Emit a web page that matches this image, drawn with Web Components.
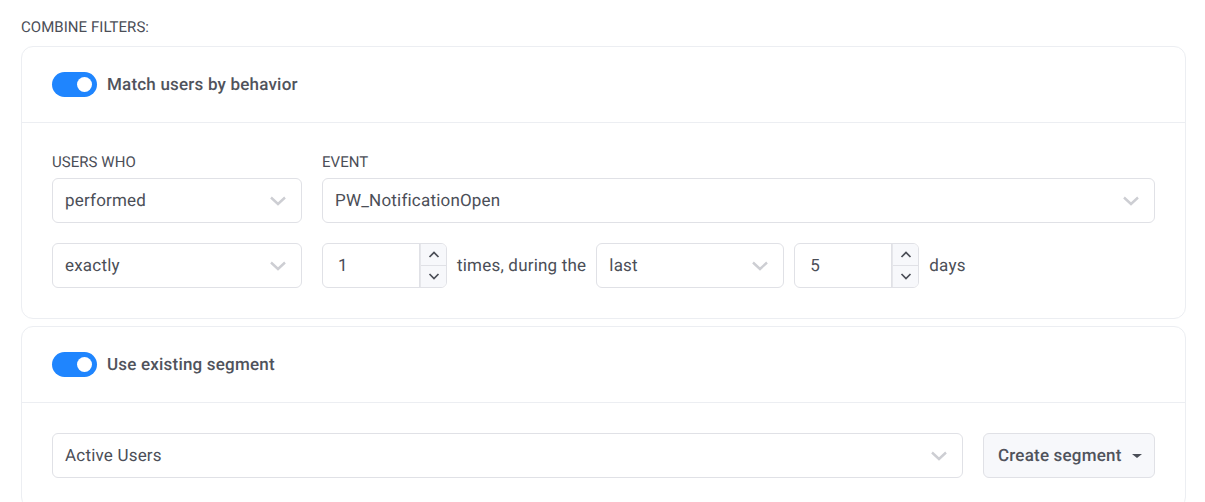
<!DOCTYPE html>
<html lang="en"><head><meta charset="utf-8"><title>Combine filters</title>
<style>
html,body{margin:0;height:502px;overflow:hidden;background:#fff}
body{font-family:Roboto,"Liberation Sans",sans-serif;color:#4b4e57;font-size:17px;text-rendering:geometricPrecision}
main{display:flex;flex-direction:column;gap:7px;padding:0 19px 0 21px}
.row{display:flex;align-items:center;gap:10px}
.gap20{gap:20px}
.stack{display:flex;flex-direction:column;gap:20px}
.cols{display:grid;grid-template-columns:250px 1fr;column-gap:20px;row-gap:7px}
.s2{display:flex;align-items:center;gap:10px}
.t{letter-spacing:.2px}
</style></head><body>
<template id="t-card"><style>
:host{display:block;border:1px solid #eceef2;border-radius:12px;background:#fff}
header{display:flex;align-items:center;gap:10px;height:75px;padding:0 30px;border-bottom:1px solid #eceef2;font-size:17px;font-weight:500;letter-spacing:.2px;color:#50535c}
.sw{width:45px;height:25px;border-radius:13px;background:#1f85fe;position:relative;flex:none}
.sw::after{content:"";position:absolute;right:5px;top:5px;width:15px;height:15px;border-radius:50%;background:#fff}
section{padding:30px}
</style><header><span class="sw"></span><slot name="title"></slot></header><section><slot></slot></section></template>

<template id="t-select"><style>
:host{display:flex;align-items:center;justify-content:space-between;box-sizing:border-box;height:45px;border:1px solid #e0e1e6;border-radius:6px;background:#fff;padding:0 14px 0 12px;font-size:17px;letter-spacing:.2px;color:#4b4e57}
svg{width:18px;height:10px;fill:none;stroke:#cdced3;stroke-width:2.4}
</style><span class="l"><slot></slot></span><svg viewBox="0 0 18 10"><path d="M2 1.500 9 8l7-6.500"/></svg></template>

<template id="t-num"><style>
:host{display:flex;box-sizing:border-box;width:125px;height:45px;border:1px solid #e0e1e6;border-radius:6px;background:#fff;font-size:17px;color:#4b4e57;overflow:hidden}
.v{flex:1;display:flex;align-items:center;padding:0 0 0 15px;border-right:1px solid #e0e1e6}
.b{width:25px;display:flex;flex-direction:column;background:#f7f8fb;border-left:1px solid #e6e7eb}
.b span{flex:1;display:flex;align-items:center;justify-content:center}
.b span+span{border-top:1px solid #e0e1e6}
svg{width:12px;height:7px;fill:none;stroke:#4b4e57;stroke-width:1.7}
</style><div class="v"><slot></slot></div><div class="b"><span><svg viewBox="0 0 12 7"><path d="M1.500 6 6 1.500 10.500 6"/></svg></span><span><svg viewBox="0 0 12 7"><path d="M1.500 1 6 5.500 10.500 1"/></svg></span></div></template>

<template id="t-label"><style>
:host{display:block;font-size:15px;line-height:18px;color:#4b4e57;text-transform:uppercase;letter-spacing:.05px}
</style><slot></slot></template>

<template id="t-button"><style>
:host{display:flex;align-items:center;gap:10px;box-sizing:border-box;height:45px;border:1px solid #e0e1e6;border-radius:6px;background:#f7f8fb;padding-left:14px;font-size:17px;font-weight:500;letter-spacing:.2px;color:#50535c}
i{width:0;height:0;border:5px solid transparent;border-top:4px solid #4b4e57;border-bottom:0}
</style><span class="l"><slot></slot></span><i></i></template>

<main>
<x-label style="padding-top:18px;margin-bottom:-7px;height:28px">Combine filters:</x-label>
<x-card><span slot="title">Match users by behavior</span>
  <div class="stack">
    <div class="cols">
      <x-label>Users who</x-label><x-label>Event</x-label>
      <x-select>performed</x-select><x-select>PW_NotificationOpen</x-select>
    </div>
    <div class="row gap20">
      <x-select style="width:250px;flex:none">exactly</x-select>
      <div class="s2">
        <x-num>1</x-num><span class="t">times, during the</span>
        <x-select style="width:188px">last</x-select>
        <x-num>5</x-num><span class="t">days</span>
      </div>
    </div>
  </div>
</x-card>
<x-card><span slot="title">Use existing segment</span>
  <div class="row gap20"><x-select style="flex:1">Active Users</x-select><x-button style="width:172px;flex:none">Create segment</x-button></div>
</x-card>
</main>
<script>
for (const [tag,id] of [['x-card','t-card'],['x-select','t-select'],['x-num','t-num'],['x-label','t-label'],['x-button','t-button']]) {
  customElements.define(tag, class extends HTMLElement {
    constructor(){super();this.attachShadow({mode:'open'}).appendChild(document.getElementById(id).content.cloneNode(true));}
  });
}
</script>
</body></html>
